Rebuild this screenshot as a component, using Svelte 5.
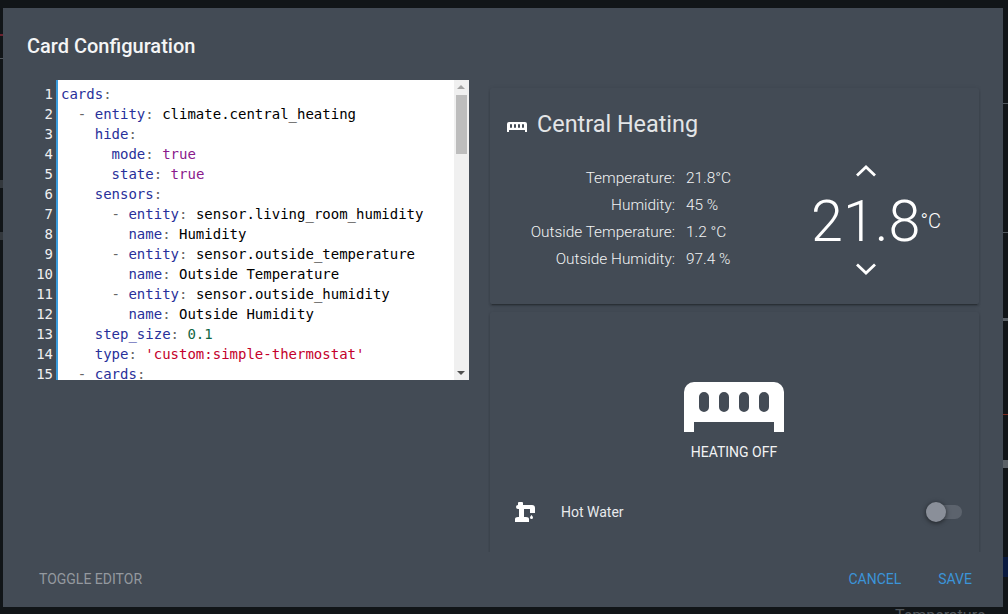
<script>
  const K = 'k', V = 'v', B = 'b', N = 'n', S = 's', P = 'p';
  const lines = [
    [['cards', K], [':', P]],
    [['  - ', P], ['entity', K], [': ', P], ['climate.central_heating', V]],
    [['    ', P], ['hide', K], [':', P]],
    [['      ', P], ['mode', K], [': ', P], ['true', B]],
    [['      ', P], ['state', K], [': ', P], ['true', B]],
    [['    ', P], ['sensors', K], [':', P]],
    [['      - ', P], ['entity', K], [': ', P], ['sensor.living_room_humidity', V]],
    [['        ', P], ['name', K], [': ', P], ['Humidity', V]],
    [['      - ', P], ['entity', K], [': ', P], ['sensor.outside_temperature', V]],
    [['        ', P], ['name', K], [': ', P], ['Outside Temperature', V]],
    [['      - ', P], ['entity', K], [': ', P], ['sensor.outside_humidity', V]],
    [['        ', P], ['name', K], [': ', P], ['Outside Humidity', V]],
    [['    ', P], ['step_size', K], [': ', P], ['0.1', N]],
    [['    ', P], ['type', K], [': ', P], ["'custom:simple-thermostat'", S]],
    [['  - ', P], ['cards', K], [':', P]]
  ];
  const sensors = [
    ['Temperature:', '21.8°C'],
    ['Humidity:', '45 %'],
    ['Outside Temperature:', '1.2 °C'],
    ['Outside Humidity:', '97.4 %']
  ];
  const heater = 'M10 0H90A10 10 0 0 1 100 10V50H90V40H10V50H0V10A10 10 0 0 1 10 0ZM20 10A5 5 0 0 0 15 15V25A5 5 0 0 0 25 25V15A5 5 0 0 0 20 10ZM40 10A5 5 0 0 0 35 15V25A5 5 0 0 0 45 25V15A5 5 0 0 0 40 10ZM60 10A5 5 0 0 0 55 15V25A5 5 0 0 0 65 25V15A5 5 0 0 0 60 10ZM80 10A5 5 0 0 0 75 15V25A5 5 0 0 0 85 25V15A5 5 0 0 0 80 10Z';
  const pump = 'M3 1A1 1 0 0 1 4 0H7A1 1 0 0 1 8 1V3H17A3 3 0 0 1 20 6V11H15V7H9V15H11A3 2 0 0 1 14 17V20H0V17A3 2 0 0 1 3 15H4V7H3A2 2 0 0 1 3 3ZM16.5 13C16.5 13 18 14.6 18 15.6A1.5 1.5 0 0 1 15 15.6C15 14.6 16.5 13 16.5 13Z';
  const ticks = [
    { x: 0, y: 34, w: 3, h: 2, c: '#6b2230' },
    { x: 0, y: 58, w: 3, h: 1, c: '#50565c' },
    { x: 0, y: 180, w: 3, h: 8, c: '#33383d' },
    { x: 0, y: 232, w: 3, h: 8, c: '#33383d' },
    { x: 1003, y: 103, w: 5, h: 1, c: '#50565c' },
    { x: 1003, y: 232, w: 5, h: 1, c: '#50565c' },
    { x: 1003, y: 318, w: 5, h: 3, c: '#5a6066' },
    { x: 1003, y: 414, w: 5, h: 1, c: '#7a2a20' },
    { x: 1003, y: 460, w: 5, h: 8, c: '#5a6066' },
    { x: 1003, y: 557, w: 5, h: 20, c: '#0a1a40' }
  ];
</script>

<div class="page">
  {#each ticks as t}
    <span class="tick" style="left:{t.x}px;top:{t.y}px;width:{t.w}px;height:{t.h}px;background:{t.c}"></span>
  {/each}
  <span class="behind">Temperature</span>
  <section class="dialog">
    <h2>Card Configuration</h2>
    <div class="content">
      <div class="editor">
        <div class="gutter">
          {#each lines as _, i}<div>{i + 1}</div>{/each}
        </div>
        <div class="code">
          {#each lines as line}
            <div class="line">{#each line as [text, cls]}<span class={cls}>{text}</span>{/each}</div>
          {/each}
        </div>
        <div class="scrollbar">
          <span class="arrow up"></span>
          <span class="thumb"></span>
          <span class="arrow down"></span>
        </div>
      </div>

      <div class="preview">
        <div class="card thermostat">
          <header>
            <svg class="small-heater" viewBox="0 0 100 50"><path fill-rule="evenodd" d={heater} /></svg>
            <span>Central Heating</span>
          </header>
          <div class="body">
            <div class="sensors">
              {#each sensors as [label, value]}
                <div class="label">{label}</div>
                <div class="value">{value}</div>
              {/each}
            </div>
            <div class="temp">
              <svg class="chev" viewBox="0 0 20 12"><path d="M1 10.5L10 2L19 10.5" /></svg>
              <div class="reading"><span class="num">21.8</span><span class="unit">°C</span></div>
              <svg class="chev" viewBox="0 0 20 12"><path d="M1 1.5L10 10L19 1.5" /></svg>
            </div>
          </div>
        </div>

        <div class="card controls">
          <svg class="big-heater" viewBox="0 0 100 50"><path fill-rule="evenodd" d={heater} /></svg>
          <div class="state">HEATING OFF</div>
          <div class="row">
            <svg class="pump" viewBox="0 0 20 20"><path fill-rule="evenodd" d={pump} /></svg>
            <span class="name">Hot Water</span>
            <span class="toggle"><span class="knob"></span></span>
          </div>
        </div>
      </div>
    </div>
    <footer>
      <button class="muted">TOGGLE EDITOR</button>
      <span class="spacer"></span>
      <button class="action cancel">CANCEL</button>
      <button class="action">SAVE</button>
    </footer>
  </section>
</div>

<style>
  :global(body) { margin: 0; background: #111518; }
  .page {
    position: relative;
    width: 1008px;
    height: 614px;
    overflow: hidden;
    background: #111518;
    padding: 8px 0 0 3px;
    box-sizing: border-box;
    font-family: Roboto, "Liberation Sans", sans-serif;
  }
  .tick { position: absolute; }
  .behind {
    position: absolute;
    left: 895px;
    top: 606px;
    font-size: 16px;
    line-height: 20px;
    color: #50565c;
  }
  .dialog {
    position: relative;
    width: 1000px;
    height: 599px;
    background: #434b55;
    display: flex;
    flex-direction: column;
  }
  h2 {
    margin: 0;
    height: 72px;
    padding: 26px 24px 0;
    box-sizing: border-box;
    font-size: 20px;
    line-height: 24px;
    font-weight: 500;
    color: #f4f5f6;
  }
  .content {
    display: flex;
    gap: 19px;
    height: 472px;
    padding: 0 24px;
  }
  .editor {
    display: flex;
    width: 442px;
    height: 300px;
    overflow: hidden;
    flex: none;
    font-family: "DejaVu Sans Mono", monospace;
    font-size: 14px;
    line-height: 20px;
  }
  .gutter {
    width: 29px;
    flex: none;
    padding: 4px 3px 0 0;
    box-sizing: border-box;
    text-align: right;
    color: #f0f0f0;
  }
  .code {
    flex: 1;
    min-width: 0;
    background: #fff;
    border-left: 2px solid #3a9bdc;
    padding: 4px 0 0 3px;
    color: #000;
  }
  .line { white-space: pre; height: 20px; }
  .k { color: #28309a; }
  .v { color: #000; }
  .b { color: #8a1a8c; }
  .n { color: #116644; }
  .s { color: #c4002b; }
  .p { color: #666; }
  .scrollbar {
    width: 15px;
    flex: none;
    background: #f0f0f0;
    position: relative;
  }
  .thumb {
    position: absolute;
    top: 15px;
    left: 2px;
    width: 11px;
    height: 59px;
    background: #bdbdbd;
  }
  .arrow {
    position: absolute;
    left: 3px;
    width: 0;
    height: 0;
    border-left: 4px solid transparent;
    border-right: 4px solid transparent;
  }
  .arrow.up { top: 5px; border-bottom: 4px solid #a3a3a3; }
  .arrow.down { bottom: 5px; border-top: 4px solid #505050; }
  .preview {
    width: 493px;
    height: 472px;
    margin-right: -3px;
    overflow: hidden;
    padding: 8px 2px 0;
    box-sizing: border-box;
    display: flex;
    flex-direction: column;
    gap: 8px;
    flex: none;
  }
  .card {
    background: #434b55;
    border-radius: 2px;
    box-shadow: 0 2px 2px rgba(0,0,0,.14), 0 1px 5px rgba(0,0,0,.12), 0 3px 1px -2px rgba(0,0,0,.2);
    color: #fff;
    flex: none;
  }
  .thermostat { height: 216px; padding: 18px 0 0 17px; box-sizing: border-box; }
  header {
    display: flex;
    align-items: center;
    height: 36px;
    font-size: 23.4px;
    font-weight: 400;
    color: #e3e5e7;
  }
  .small-heater { width: 20px; height: 10px; fill: #fff; margin: 6px 10px 0 0; }
  .body { display: flex; }
  .sensors {
    width: 226px;
    padding-top: 22px;
    display: grid;
    grid-template-columns: 168px auto;
    column-gap: 11px;
    grid-auto-rows: 27px;
    align-items: center;
    font-size: 15.4px;
    font-weight: 300;
    color: #f2f3f4;
    height: 108px;
  }
  .label { text-align: right; white-space: nowrap; }
  .value { white-space: nowrap; }
  .temp {
    margin-left: 63px;
    width: 140px;
    display: flex;
    flex-direction: column;
    align-items: center;
    padding-top: 23px;
  }
  .chev { width: 20px; height: 12px; fill: none; stroke: #fff; stroke-width: 2.8; }
  .reading {
    height: 86px;
    display: flex;
    width: 130px;
    align-items: flex-start;
    box-sizing: border-box;
    padding-left: 10px;
  }
  .num { font-size: 57.5px; font-weight: 300; line-height: 90px; }
  .unit { font-size: 20px; font-weight: 300; line-height: 24px; margin-top: 32px; }
  .controls {
    height: 260px;
    display: flex;
    flex-direction: column;
    align-items: center;
    padding: 70px 1px 0 0;
    box-sizing: border-box;
  }
  .big-heater { width: 100px; height: 50px; fill: #fff; flex: none; }
  .state { margin-top: 12px; font-size: 14px; line-height: 16px; color: #f2f3f4; }
  .row {
    align-self: stretch;
    display: flex;
    align-items: center;
    margin-top: 32px;
    padding: 0 16px 0 25px;
    height: 40px;
  }
  .pump { width: 20px; height: 20px; fill: #fff; }
  .name { margin-left: 26px; font-size: 14px; color: #e8eaec; }
  .toggle {
    margin-left: auto;
    width: 36px;
    height: 14px;
    border-radius: 7px;
    background: #5c636d;
    position: relative;
  }
  .knob {
    position: absolute;
    left: 0;
    top: -3px;
    width: 20px;
    height: 20px;
    border-radius: 50%;
    background: #8a8f99;
    box-shadow: 0 1px 5px rgba(0,0,0,.6);
  }
  footer {
    display: flex;
    align-items: flex-start;
    height: 55px;
    padding: 17px 31px 0 36px;
    box-sizing: border-box;
  }
  .spacer { flex: 1; }
  button {
    background: none;
    border: 0;
    padding: 0;
    font: 400 14px/20px Roboto, "Liberation Sans", sans-serif;
  }
  .muted { color: #94999f; }
  .action { color: #3b94d9; }
  .cancel { margin-right: 37px; }
</style>
